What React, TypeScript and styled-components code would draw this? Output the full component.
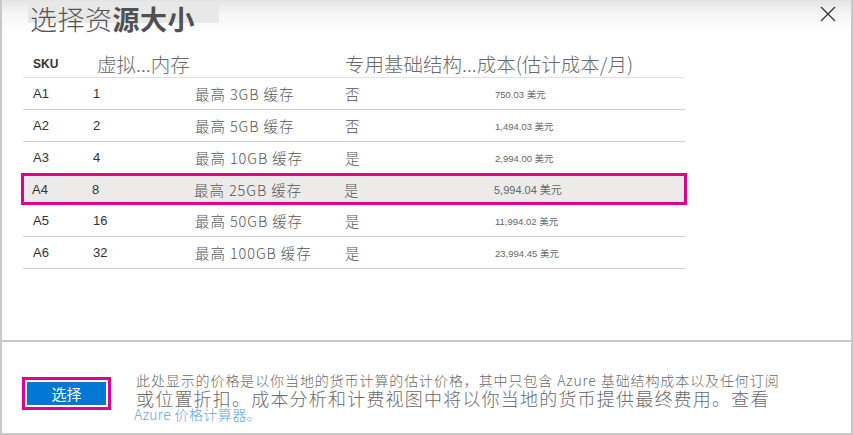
import React from "react";
import styled, { createGlobalStyle } from "styled-components";

const Global = createGlobalStyle`
  html, body { margin: 0; padding: 0; background: #fff; }
  body { font-family: "Liberation Sans", "Noto Sans CJK SC", sans-serif; }
`;

const Frame = styled.div`
  width: 853px;
  height: 435px;
  box-sizing: border-box;
  border-left: 2px solid #c8c8c8;
  border-right: 2px solid #c8c8c8;
  border-bottom: 2px solid #c8c8c8;
  background: linear-gradient(#e4e4e4 0px, #f6f6f6 14px, #ffffff 34px);
  display: flex;
  flex-direction: column;
  position: relative;
`;

const Main = styled.div`
  flex: 1;
  padding: 3px 0 0 21px;
  border-bottom: 2px solid #c8c8c8;
`;

const Title = styled.h1`
  margin: 0 0 0 5px;
  font-family: "Noto Sans CJK SC", sans-serif;
  font-size: 27px;
  line-height: 32px;
  font-weight: 300;
  color: #555;
  letter-spacing: 0.5px;
  display: inline-block;
  padding: 0 24px 0 2px;
  background: linear-gradient(#e8e8e8 0, #e8e8e8 20px, transparent 20px);
`;

const Bold = styled.span`
  font-weight: 700;
  color: #505050;
`;

const Close = styled.button`
  position: absolute;
  top: 6px;
  right: 13px;
  width: 20px;
  height: 18px;
  padding: 0;
  border: none;
  background: none;
  cursor: pointer;
`;

const Table = styled.div`
  width: 662px;
  margin-top: 13px;
`;

const HeaderRow = styled.div`
  display: flex;
  align-items: center;
  height: 30px;
  border-bottom: 1px solid #e0e0e0;
  padding-left: 10px;
  padding-top: 2px;
  box-sizing: border-box;
`;

const HeadSku = styled.div`
  width: 64px;
  font-size: 12px;
  font-weight: 700;
  color: #333;
`;

const HeadCell = styled.div<{ $w: number }>`
  width: ${(p) => p.$w}px;
  font-family: "Noto Sans CJK SC", sans-serif;
  font-size: 19.5px;
  font-weight: 300;
  color: #6a6a6a;
  white-space: nowrap;
`;

const Row = styled.div<{ $selected?: boolean }>`
  display: grid;
  grid-template-columns: 60px 102px 150px 150px 1fr;
  align-items: center;
  height: 32px;
  box-sizing: border-box;
  padding-left: ${(p) => (p.$selected ? "8px" : "10px")};
  border-bottom: 1px solid #cfcfcf;
  ${(p) =>
    p.$selected &&
    `
    background: #ecebe9;
    border: 3px solid #e3008c;
    margin-left: -2px;
    margin-right: -2px;
    margin-top: -1px;
  `}
`;

const Cell = styled.div`
  font-family: "Liberation Sans", "Noto Sans CJK SC", sans-serif;
  font-size: 13px;
  color: #333;
  white-space: nowrap;
`;

const MemCell = styled.div`
  font-family: "Noto Sans CJK SC", sans-serif;
  font-weight: 300;
  font-size: 14.5px;
  letter-spacing: 0.9px;
  color: #555;
  white-space: nowrap;
`;

const CostCell = styled.div<{ $big?: boolean }>`
  font-family: "Liberation Sans", "Noto Sans CJK SC", sans-serif;
  font-size: ${(p) => (p.$big ? "11px" : "9.5px")};
  color: #666;
  white-space: nowrap;
`;

const Footer = styled.div`
  height: 91px;
  display: flex;
  align-items: flex-start;
  padding: 35px 0 0 20px;
  box-sizing: border-box;
`;

const ButtonRing = styled.div`
  border: 3px solid #e3008c;
  padding: 2px;
  background: #fff;
  margin-right: 25px;
`;

const PrimaryButton = styled.button`
  width: 79px;
  height: 23px;
  border: 1px solid #1c6fc1;
  background: #0078d4;
  color: #fff;
  font-family: "Noto Sans CJK SC", sans-serif;
  font-size: 15px;
  line-height: 20px;
  padding: 0;
  display: block;
  cursor: pointer;
`;

const Notes = styled.div`
  font-family: "Noto Sans CJK SC", sans-serif;
  color: #6a6a6a;
  margin-top: -5px;
`;

const Line1 = styled.div`
  font-size: 14px;
  line-height: 17px;
  font-weight: 300;
  letter-spacing: 0.9px;
  white-space: nowrap;
`;

const Line2 = styled.div`
  font-size: 18px;
  line-height: 18px;
  font-weight: 300;
  letter-spacing: 1.2px;
  white-space: nowrap;
`;

const Link = styled.a`
  display: block;
  font-size: 14px;
  line-height: 15px;
  color: #5ea6e4;
  font-weight: 300;
  letter-spacing: 0.4px;
  text-decoration: none;
  margin-left: -2px;
`;

const rows = [
  { sku: "A1", cpu: "1", mem: "最高 3GB 缓存", infra: "否", cost: "750.03 美元" },
  { sku: "A2", cpu: "2", mem: "最高 5GB 缓存", infra: "否", cost: "1,494.03 美元" },
  { sku: "A3", cpu: "4", mem: "最高 10GB 缓存", infra: "是", cost: "2,994.00 美元" },
  { sku: "A4", cpu: "8", mem: "最高 25GB 缓存", infra: "是", cost: "5,994.04 美元", selected: true },
  { sku: "A5", cpu: "16", mem: "最高 50GB 缓存", infra: "是", cost: "11,994.02 美元" },
  { sku: "A6", cpu: "32", mem: "最高 100GB 缓存", infra: "是", cost: "23,994.45 美元" },
];

export default function App() {
  return (
    <>
      <Global />
      <Frame>
        <Close aria-label="关闭">
          <svg width="18" height="16" viewBox="0 0 18 16">
            <path d="M2 1 L16 15 M16 1 L2 15" stroke="#333" strokeWidth="1.3" fill="none" />
          </svg>
        </Close>
        <Main>
          <Title>
            选择资<Bold>源大小</Bold>
          </Title>
          <Table>
            <HeaderRow>
              <HeadSku>SKU</HeadSku>
              <HeadCell $w={248}>虚拟...内存</HeadCell>
              <HeadCell $w={320}>专用基础结构...成本(估计成本/月)</HeadCell>
            </HeaderRow>
            {rows.map((r) => (
              <Row key={r.sku} $selected={r.selected}>
                <Cell>{r.sku}</Cell>
                <Cell>{r.cpu}</Cell>
                <MemCell>{r.mem}</MemCell>
                <MemCell>{r.infra}</MemCell>
                <CostCell $big={r.selected}>{r.cost}</CostCell>
              </Row>
            ))}
          </Table>
        </Main>
        <Footer>
          <ButtonRing>
            <PrimaryButton>选择</PrimaryButton>
          </ButtonRing>
          <Notes>
            <Line1>此处显示的价格是以你当地的货币计算的估计价格，其中只包含 Azure 基础结构成本以及任何订阅</Line1>
            <Line2>或位置折扣。成本分析和计费视图中将以你当地的货币提供最终费用。查看</Line2>
            <Link href="#">Azure 价格计算器。</Link>
          </Notes>
        </Footer>
      </Frame>
    </>
  );
}
